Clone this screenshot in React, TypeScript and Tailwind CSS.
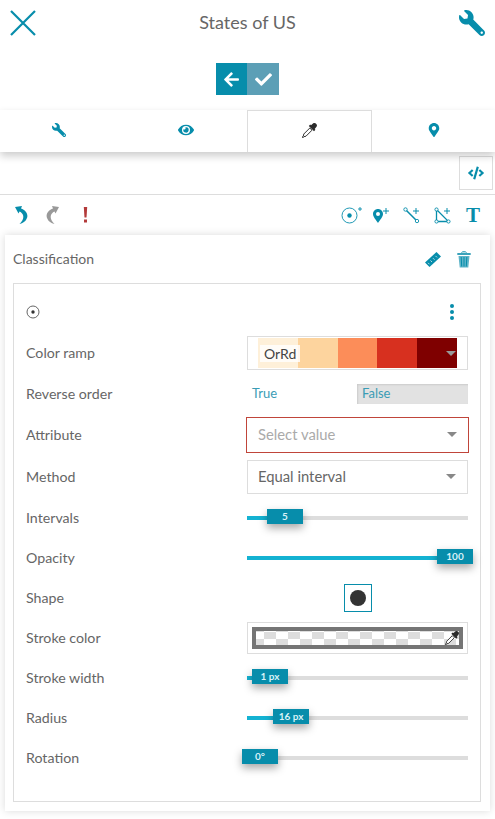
import React from 'react';
import { FaArrowLeft, FaCheck, FaCode, FaEye, FaMapMarkerAlt, FaWrench } from 'react-icons/fa';

const teal = 'text-[#078dab]';

const CloseIcon = () => (
    <svg width="26" height="26" viewBox="0 0 26 26" className="block">
        <path d="M1 1 L25 25 M25 1 L1 25" stroke="#078dab" strokeWidth="2.2" fill="none" />
    </svg>
);

const UndoIcon = ({ color, flip }: { color: string; flip?: boolean }) => (
    <svg width="13" height="18" viewBox="0 0 13 18" className={flip ? 'block -scale-x-100' : 'block'}>
        <path d="M0 1 L7 0 L6 2.5 C11 4 14 9 11.5 13 C10.5 15.5 8 17 4.5 18 C7.5 15 9 12.5 8 9 C7.5 7.5 6 6 4.5 5.5 L3.5 7.5 Z" fill={color} />
    </svg>
);

const AlertIcon = () => (
    <svg width="5" height="16" viewBox="0 0 5 16" className="block">
        <path d="M0.8 0 H4.2 L3.5 10.5 H1.5 Z" fill="#b33a3a" />
        <rect x="1" y="12.5" width="3" height="3" fill="#b33a3a" />
    </svg>
);

const DropperIcon = ({ size = 15 }: { size?: number }) => (
    <svg width={size} height={size} viewBox="0 0 15 15" className="block">
        <path d="M9 2.2 L11 0.6 C12 -0.2 13.5 0 14.3 0.9 C15.2 1.8 15.2 3.2 14.3 4.1 L12.7 6 L13.4 6.8 L12 8.2 L6.8 3 L8.2 1.6 Z" fill="#2b2b2b" />
        <path d="M7.8 5 L10 7.2 L4 13.2 L1.8 13.7 L1 14.8 L0.2 14 L1.3 13.2 L1.8 11 Z" fill="#fff" stroke="#333" strokeWidth="1" />
    </svg>
);

const RulerIcon = () => (
    <svg width="16" height="15" viewBox="0 0 16 15" className="block">
        <path d="M0 10.5 L11.5 0 L16 4.5 L4.5 15 Z" fill="#078dab" />
        <path d="M3 10.8 L4.5 12.3 M5.5 8.5 L7 10 M8 6.2 L9.5 7.7 M10.5 3.9 L12 5.4" stroke="#fff" strokeWidth="0.7" />
    </svg>
);

const TrashIcon = () => (
    <svg width="14" height="17" viewBox="0 0 14 17" className="block">
        <path d="M4.5 1.5 C5 0.5 9 0.5 9.5 1.5" stroke="#078dab" strokeWidth="1" fill="none" />
        <rect x="0.3" y="2" width="13.4" height="2" fill="#3ba3bb" />
        <path d="M1.5 5 H12.5 L11.3 16.5 H2.7 Z" fill="#5eb4c8" />
        <path d="M4.2 6 L4.7 15.5 M7 6 V15.5 M9.8 6 L9.3 15.5" stroke="#078dab" strokeWidth="1" />
    </svg>
);

const PointAddIcon = () => (
    <svg width="21" height="18" viewBox="0 0 21 18" className="block">
        <circle cx="8.5" cy="9.5" r="7.5" stroke="#078dab" strokeWidth="0.9" fill="none" />
        <circle cx="8.5" cy="9.5" r="2.2" fill="#078dab" />
        <path d="M17 3 H21 M19 1 V5" stroke="#078dab" strokeWidth="0.9" />
    </svg>
);

const MarkerAddIcon = () => (
    <svg width="16" height="16" viewBox="0 0 16 16" className="block">
        <path fillRule="evenodd" d="M5 2 C2.2 2 0 4.2 0 7 C0 10 3.5 13.5 5 16 C6.5 13.5 10 10 10 7 C10 4.2 7.8 2 5 2 Z M5 5 A2 2 0 1 1 5 9 A2 2 0 1 1 5 5 Z" fill="#078dab" />
        <path d="M10 4 H16 M13 1 V7" stroke="#078dab" strokeWidth="1" />
    </svg>
);

const LineAddIcon = () => (
    <svg width="17" height="17" viewBox="0 0 17 17" className="block">
        <path d="M3 3 L13.5 13.5" stroke="#078dab" strokeWidth="1.5" />
        <circle cx="2.5" cy="2.5" r="1.7" stroke="#078dab" strokeWidth="0.9" fill="#fff" />
        <circle cx="14" cy="14" r="1.7" stroke="#078dab" strokeWidth="0.9" fill="#fff" />
        <path d="M10 4 H16 M13 1 V7" stroke="#078dab" strokeWidth="1" />
    </svg>
);

const PolygonAddIcon = () => (
    <svg width="17" height="17" viewBox="0 0 17 17" className="block">
        <path d="M2.5 2.5 L14.5 14.5 H2.5 Z" stroke="#078dab" strokeWidth="1.3" fill="none" />
        <circle cx="2.5" cy="2.5" r="1.6" stroke="#078dab" strokeWidth="0.9" fill="#fff" />
        <circle cx="14.5" cy="14.5" r="1.6" stroke="#078dab" strokeWidth="0.9" fill="#fff" />
        <circle cx="2.5" cy="14.5" r="1.6" stroke="#078dab" strokeWidth="0.9" fill="#fff" />
        <path d="M10 4 H16 M13 1 V7" stroke="#078dab" strokeWidth="1" />
    </svg>
);

const Caret = ({ className = 'border-t-[#888]' }: { className?: string }) => (
    <span className={`w-0 h-0 border-x-[5px] border-x-transparent border-t-[5px] ${className}`} />
);

const Row = ({ label, h = 'h-10', children }: { label: string; h?: string; children: React.ReactNode }) => (
    <div className={`flex items-center pl-3 pr-3 ${h}`}>
        <div className="w-[221px] text-[14.2px] text-[#666] shrink-0">{label}</div>
        <div className="w-[221px] shrink-0">{children}</div>
    </div>
);

const SelectBox = ({ text, error }: { text: string; error?: boolean }) => (
    <div className={error
        ? 'h-9 -mx-px flex items-center justify-between pl-[11px] pr-[11px] border border-[#c0453a] text-[14.8px] text-[#aaa]'
        : 'h-[34px] flex items-center justify-between pl-[10px] pr-[11px] border border-[#ddd] text-[14.8px] text-[#666]'}>
        <span>{text}</span>
        <Caret />
    </div>
);

const Slider = ({ fill, thumb, value }: { fill: number; thumb: number; value: string }) => (
    <div className="relative h-1 bg-[#dddddd]">
        <div className="h-1 bg-[#14b2d2]" style={{ width: fill }} />
        <div
            className="absolute top-[-7px] w-9 h-[15px] bg-[#078dab] text-[#d8f2f8] text-[10px] font-bold flex items-center justify-center shadow-[0_4px_8px_rgba(0,0,0,0.35)]"
            style={{ left: thumb }}
        >
            {value}
        </div>
    </div>
);

const ramp = ['bg-[#fef0d9]', 'bg-[#fdd49e]', 'bg-[#fc8d59]', 'bg-[#d7301f]', 'bg-[#7f0000]'];

export default function App() {
    return (
        <div className="w-[495px] h-[819px] bg-white overflow-hidden font-['Lato','Open_Sans',sans-serif]">
            {/* top bar */}
            <div className="flex items-center justify-between h-[45px] pl-[10px] pr-[10px]">
                <CloseIcon />
                <div className="text-[18px] text-[#666]">States of US</div>
                <FaWrench className={`${teal} -scale-x-100`} size={26} />
            </div>

            <div className="flex justify-center pt-[18px] h-[65px]">
                <div className="w-[31px] h-8 bg-[#078dab] text-white flex items-center justify-center"><FaArrowLeft size={17} /></div>
                <div className="w-8 h-8 bg-[#5c9fb6] text-white flex items-center justify-center"><FaCheck size={17} /></div>
            </div>

            {/* tabs */}
            <div className="flex h-[42px] shadow-[0_4px_8px_rgba(0,0,0,0.2)] relative bg-white">
                <div className={`w-[124px] flex items-center justify-center ${teal} pr-[6px] pb-[2px]`}><FaWrench className="-scale-x-100" size={14} /></div>
                <div className={`w-[123px] flex items-center justify-center ${teal} pb-[2px]`}><FaEye size={16} /></div>
                <div className="w-[125px] h-[42px] flex items-center justify-center border border-b-0 border-[#ddd] pb-[2px]"><DropperIcon /></div>
                <div className={`w-[123px] flex items-center justify-center ${teal} pb-[2px]`}><FaMapMarkerAlt size={14} /></div>
            </div>

            <div className="flex justify-end h-[43px] pt-1 pr-[2px] border-b border-[#ddd]">
                <div className={`w-[34px] h-[34px] border border-[#ddd] flex items-center justify-center ${teal}`}><FaCode size={16} /></div>
            </div>

            {/* toolbar */}
            <div className="flex items-center justify-between h-[40px] pl-[15px] pr-[15px]">
                <div className="flex items-center">
                    <UndoIcon color="#078dab" />
                    <div className="ml-[18px]"><UndoIcon color="#999" flip /></div>
                    <div className="ml-[24px]"><AlertIcon /></div>
                </div>
                <div className="flex items-center">
                    <PointAddIcon />
                    <div className="ml-[11px]"><MarkerAddIcon /></div>
                    <div className="ml-[14px]"><LineAddIcon /></div>
                    <div className="ml-[14px]"><PolygonAddIcon /></div>
                    <div className={`ml-[15px] text-[21px] leading-none font-bold ${teal} font-['Liberation_Serif',serif]`}>T</div>
                </div>
            </div>

            {/* classification card */}
            <div className="mx-[5px] h-[576px] pl-2 pr-[9px] shadow-[0_0_8px_rgba(0,0,0,0.15)] bg-white">
                <div className="flex items-center justify-between h-[48px] pr-[10px]">
                    <div className="text-sm text-[#666]">Classification</div>
                    <div className="flex items-center gap-[16px]">
                        <RulerIcon />
                        <TrashIcon />
                    </div>
                </div>

                <div className="h-[519px] border border-[#ddd]">
                    <div className="flex items-center justify-between h-[48px] pl-3 pr-[26px] pt-[8px]">
                        <svg width="14" height="14" viewBox="0 0 14 14" className="block">
                            <circle cx="7" cy="7" r="6" stroke="#555" strokeWidth="0.9" fill="none" />
                            <circle cx="7" cy="7" r="1.7" fill="#333" />
                        </svg>
                        <div className="flex flex-col gap-[2px]">
                            <span className="w-1 h-1 rounded-full bg-[#078dab]" />
                            <span className="w-1 h-1 rounded-full bg-[#078dab]" />
                            <span className="w-1 h-1 rounded-full bg-[#078dab]" />
                        </div>
                    </div>

                    <Row label="Color ramp" h="h-[41px]">
                        <div className="relative h-[34px] border border-[#ddd] pl-[10px] pr-[10px] py-px flex">
                            {ramp.map((c) => (
                                <div key={c} className={`flex-1 ${c}`} />
                            ))}
                            <span className="absolute left-3 top-2 h-[17px] px-1 bg-white/80 text-sm leading-[17px] text-[#444]">OrRd</span>
                            <span className="absolute right-[11px] top-[14px] flex"><Caret className="border-t-[#999]" /></span>
                        </div>
                    </Row>

                    <Row label="Reverse order" h="h-[41px]">
                        <div className="flex items-center h-5 text-[13px] text-[#3a9cb5]">
                            <div className="w-[110px] pl-[5px]">True</div>
                            <div className="flex-1 h-5 flex items-center pl-[5px] bg-[#e2e2e2] shadow-[inset_1px_1px_2px_rgba(0,0,0,0.1)]">False</div>
                        </div>
                    </Row>

                    <Row label="Attribute" h="h-[41px]"><SelectBox text="Select value" error /></Row>
                    <Row label="Method" h="h-[43px]"><SelectBox text="Equal interval" /></Row>

                    <Row label="Intervals"><Slider fill={30} thumb={20} value="5" /></Row>
                    <Row label="Opacity"><Slider fill={205} thumb={190} value="100" /></Row>
                    <Row label="Shape">
                        <div className="flex justify-center">
                            <div className="w-7 h-7 border border-[#078dab] flex items-center justify-center">
                                <div className="w-4 h-4 rounded-full bg-[#333]" />
                            </div>
                        </div>
                    </Row>
                    <Row label="Stroke color">
                        <div className="h-8 border border-[#ddd] p-1">
                            <div className="relative h-[22px] border-4 border-[#757575] bg-[repeating-conic-gradient(#fff_0_25%,#dddddd_0_50%)] bg-[length:24px_14px] bg-[position:8px_1px]">
                                <div className="absolute right-0 top-0"><DropperIcon size={14} /></div>
                            </div>
                        </div>
                    </Row>
                    <Row label="Stroke width"><Slider fill={8} thumb={5} value="1 px" /></Row>
                    <Row label="Radius"><Slider fill={30} thumb={26} value="16 px" /></Row>
                    <Row label="Rotation"><Slider fill={0} thumb={-5} value="0°" /></Row>
                </div>
            </div>
        </div>
    );
}
